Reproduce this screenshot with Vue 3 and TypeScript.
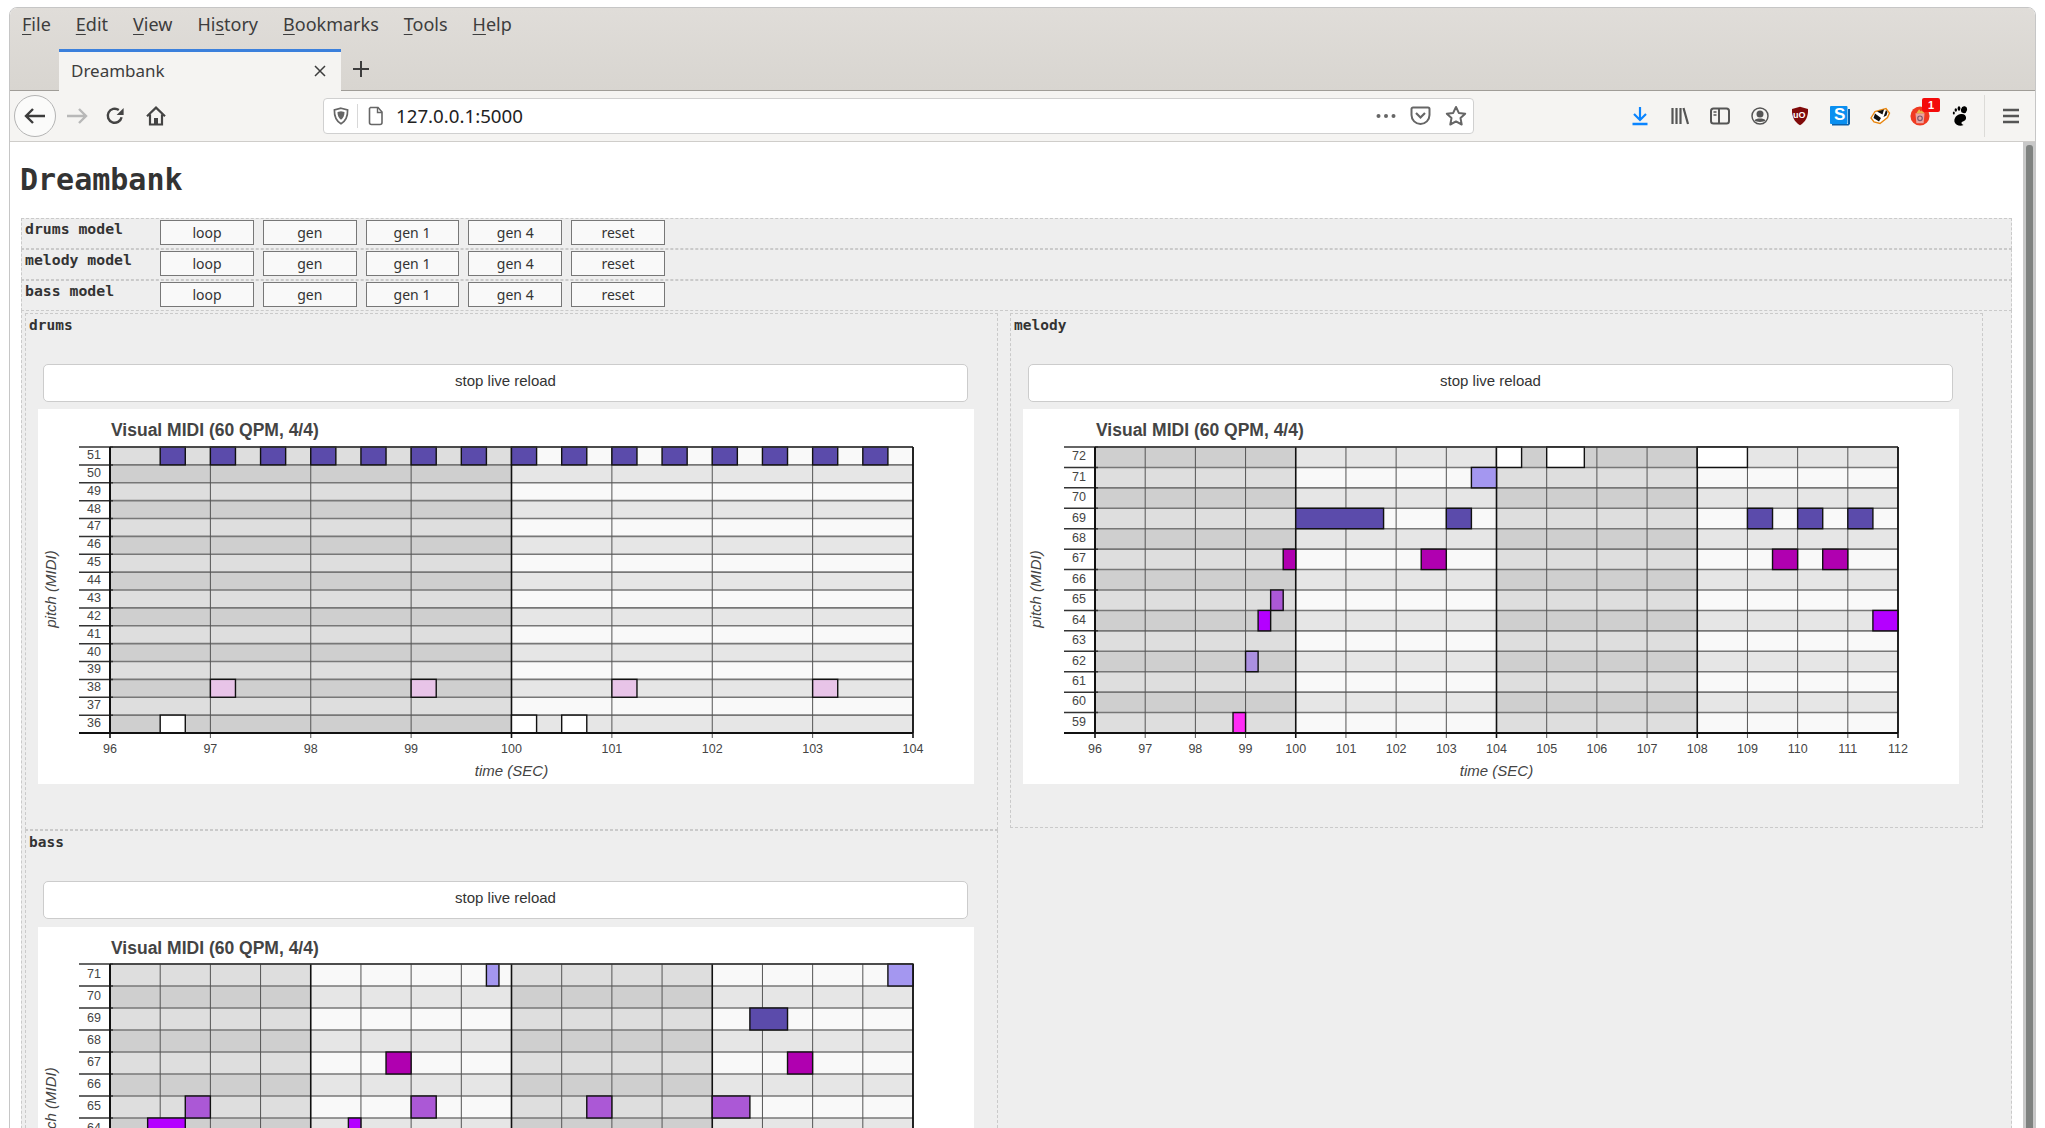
<script setup lang="ts">
type Note = [number, number, number, string];
interface ChartCfg { key: string; label: string; min: number; max: number; hi: number; lo: number; top: number; notes: Note[]; mod: string }

const P = '#5b4bab', PK = '#e8c4e8', L = '#a497f0', M = '#b000b0', V = '#ab58d6', B = '#b400ff', LV = '#ab90e0', F = '#ff2cf5', W = '#ffffff';

const drumNotes: Note[] = [];
for (let i = 0; i < 15; i++) drumNotes.push([51, 96.5 + i * 0.5, 0.25, P]);
[97, 99, 101, 103].forEach((t) => drumNotes.push([38, t, 0.25, PK]));
[96.5, 100, 100.5].forEach((t) => drumNotes.push([36, t, 0.25, W]));

const cfgs: ChartCfg[] = [
  { key: 'drums', label: 'drums', min: 96, max: 104, hi: 51, lo: 36, top: 38, notes: drumNotes, mod: 'first' },
  {
    key: 'melody', label: 'melody', min: 96, max: 112, hi: 72, lo: 59, top: 38, mod: 'side',
    notes: [
      [72, 104, 0.5, W], [72, 105, 0.75, W], [72, 108, 1, W], [71, 103.5, 0.5, L],
      [69, 100, 1.75, P], [69, 103, 0.5, P], [69, 109, 0.5, P], [69, 110, 0.5, P], [69, 111, 0.5, P],
      [67, 99.75, 0.25, M], [67, 102.5, 0.5, M], [67, 109.5, 0.5, M], [67, 110.5, 0.5, M],
      [65, 99.5, 0.25, V], [64, 99.25, 0.25, B], [64, 111.5, 0.5, B], [62, 99, 0.25, LV], [59, 98.75, 0.25, F],
    ],
  },
  {
    key: 'bass', label: 'bass', min: 96, max: 112, hi: 71, lo: 59, top: 37, mod: 'low',
    notes: [
      [71, 103.5, 0.25, L], [71, 111.5, 0.5, L], [69, 108.75, 0.75, P], [67, 101.5, 0.5, M], [67, 109.5, 0.5, M],
      [65, 97.5, 0.5, V], [65, 102, 0.5, V], [65, 105.5, 0.5, V], [65, 108, 0.75, V],
      [64, 96.75, 0.75, B], [64, 100.75, 0.25, B],
    ],
  },
];

const PX = 72, PW = 803, PH = 286;

function build(c: ChartCfg) {
  const pps = PW / (c.max - c.min);
  const count = c.hi - c.lo + 1;
  const rh = PH / count;
  const x = (t: number) => PX + (t - c.min) * pps;
  const y = (p: number) => c.top + (c.hi - p) * rh;
  const pitches = Array.from({ length: count }, (_, i) => c.hi - i);
  const secs = Array.from({ length: c.max - c.min + 1 }, (_, i) => c.min + i);
  const cells: { k: string; x: number; y: number; w: number; fill: string }[] = [];
  for (let b = 0; b * 4 < c.max - c.min; b++) {
    pitches.forEach((p) => {
      const even = p % 2 === 0;
      const dark = b % 2 === 0;
      cells.push({
        k: `${b}-${p}`, x: x(c.min + b * 4), y: y(p), w: 4 * pps,
        fill: dark ? (even ? '#cfcfcf' : '#dedede') : even ? '#e6e6e6' : '#f9f9f9',
      });
    });
  }
  return {
    ...c, rh, cells, pitches, secs, x, y,
    bottom: c.top + PH,
    notesDrawn: c.notes.map((n, i) => ({ k: i, x: x(n[1]), y: y(n[0]), w: n[2] * pps, fill: n[3] })),
  };
}
const charts = cfgs.map(build);

const menus = [
  { pre: '', key: 'F', post: 'ile' }, { pre: '', key: 'E', post: 'dit' }, { pre: '', key: 'V', post: 'iew' },
  { pre: 'Hi', key: 's', post: 'tory' }, { pre: '', key: 'B', post: 'ookmarks' }, { pre: '', key: 'T', post: 'ools' },
  { pre: '', key: 'H', post: 'elp' },
];
const models = ['drums model', 'melody model', 'bass model'];
const actions = ['loop', 'gen', 'gen 1', 'gen 4', 'reset'];
</script>

<template>
  <div class="screen">
    <div class="window">
      <header class="titlebar">
        <nav class="menubar">
          <span v-for="m in menus" :key="m.key + m.post" class="menu">{{ m.pre }}<u>{{ m.key }}</u>{{ m.post }}</span>
        </nav>
        <div class="tabstrip">
          <div class="tab">
            <span class="tab-title">Dreambank</span>
            <svg class="tab-x" width="14" height="14" viewBox="0 0 14 14"><path d="M2 2 12 12M12 2 2 12" stroke="#3d3d3d" stroke-width="1.5" fill="none" /></svg>
          </div>
          <svg class="tab-plus" width="20" height="20" viewBox="0 0 20 20"><path d="M10 2V18M2 10H18" stroke="#3d3d3d" stroke-width="2" fill="none" /></svg>
        </div>
      </header>

      <div class="toolbar">
        <div class="back">
          <svg width="24" height="20" viewBox="0 0 24 20"><path d="M22 10H3M10 3 3 10l7 7" stroke="#3c3c3c" stroke-width="2.4" fill="none" /></svg>
        </div>
        <div class="navbtn">
          <svg width="24" height="20" viewBox="0 0 24 20"><path d="M2 10H21M14 3l7 7-7 7" stroke="#b8b8b8" stroke-width="2.4" fill="none" /></svg>
        </div>
        <div class="navbtn">
          <svg width="20" height="20" viewBox="0 0 20 20"><path d="M16.6 11.2A7 7 0 1 1 13.8 4" stroke="#444" stroke-width="2.4" fill="none" /><path d="M18.6 2v7h-7z" fill="#444" /></svg>
        </div>
        <div class="navbtn home">
          <svg width="22" height="22" viewBox="0 0 22 22"><path d="M2 11.2 11 2.6l9 8.6M5 9.5V19.5H17V9.500" stroke="#444" stroke-width="2.2" fill="none" /><path d="M9 13h4v6.500H9z" fill="#444" /></svg>
        </div>

        <div class="urlbar">
          <span class="url-slot shield">
            <svg width="16" height="18" viewBox="0 0 16 18"><path d="M8 1.2 14.6 3c.2 6.400-1.800 11-6.600 13.800C3.200 14 1.200 9.400 1.400 3z" stroke="#666" stroke-width="1.700" fill="none" /><path d="M8 4.200 11.500 5c0 3.600-1 6-3.500 7.800C5.500 11 4.500 8.600 4.500 5z" fill="#666" /></svg>
          </span>
          <span class="url-sep"></span>
          <span class="url-slot page">
            <svg width="16" height="20" viewBox="0 0 16 20"><path d="M2.500 1.500H10l4 4.500V16.500a2 2 0 0 1-2 2H3.500a2 2 0 0 1-2-2V2.500z" stroke="#666" stroke-width="1.600" fill="none" /><path d="M9.500 1.500V6.500H14" stroke="#666" stroke-width="1.400" fill="none" /></svg>
          </span>
          <span class="url-text">127.0.0.1:5000</span>
          <span class="url-slot right">
            <svg width="22" height="6" viewBox="0 0 22 6"><circle cx="3.500" cy="3" r="2" fill="#666" /><circle cx="11" cy="3" r="2" fill="#666" /><circle cx="18.500" cy="3" r="2" fill="#666" /></svg>
          </span>
          <span class="url-slot">
            <svg width="21" height="20" viewBox="0 0 21 20"><path d="M3 1.500H18a1.500 1.500 0 0 1 1.500 1.500V9a9 9 0 0 1-18 0V3A1.500 1.500 0 0 1 3 1.500z" stroke="#666" stroke-width="2" fill="none" /><path d="M6 7l4.500 4.500L15 7" stroke="#666" stroke-width="2.200" fill="none" /></svg>
          </span>
          <span class="url-slot">
            <svg width="22" height="22" viewBox="0 0 22 22"><path d="M11 2l2.800 5.900 6.400.8-4.700 4.400 1.200 6.400L11 16.400l-5.700 3.100 1.200-6.400L1.800 8.700l6.400-.8z" stroke="#666" stroke-width="2" stroke-linejoin="round" fill="none" /></svg>
          </span>
        </div>

        <div class="addons">
          <span class="addon">
            <svg width="18" height="20" viewBox="0 0 18 20"><path d="M9 1V13.500M3 8l6 6 6-6" stroke="#0a84ff" stroke-width="2.200" fill="none" /><path d="M1.500 18H16.500" stroke="#0a84ff" stroke-width="2.400" /></svg>
          </span>
          <span class="addon">
            <svg width="20" height="20" viewBox="0 0 20 20"><path d="M2.500 2V18M6.500 2V18M10.500 2V18M13.500 2 18 18" stroke="#555" stroke-width="2.200" fill="none" /></svg>
          </span>
          <span class="addon">
            <svg width="20" height="18" viewBox="0 0 20 18"><rect x="1" y="1.500" width="18" height="15" rx="2.500" stroke="#555" stroke-width="2" fill="none" /><path d="M9 1.500V16.500" stroke="#555" stroke-width="2" /><path d="M3.500 5H6.500M3.500 8H6.500" stroke="#555" stroke-width="1.300" /></svg>
          </span>
          <span class="addon">
            <svg width="18" height="18" viewBox="0 0 18 18"><circle cx="9" cy="9" r="8" stroke="#555" stroke-width="1.500" fill="none" /><circle cx="9" cy="7" r="3.500" fill="#555" /><path d="M3.500 13.200C5 10.800 13 10.800 14.500 13.200 13 15.500 5 15.500 3.500 13.200z" fill="#555" /></svg>
          </span>
          <span class="addon ublock">
            <svg width="18" height="20" viewBox="0 0 18 20"><path d="M9 .8 17 3c.4 7.500-2.400 13-8 16.200C3.400 16 .6 10.500 1 3z" fill="#800a0a" /></svg>
            <span class="ublock-text">uO</span>
          </span>
          <span class="addon skype">
            <svg width="20" height="20" viewBox="0 0 20 20"><path d="M2 18V19.500H18.500L20 18V3H18V18z" fill="#0a5fa8" /><rect x="0" y="0" width="17.500" height="18" rx="1" fill="#0a8ff0" /></svg>
            <span class="skype-text">S</span>
          </span>
          <span class="addon">
            <svg width="22" height="18" viewBox="0 0 22 18"><path d="M2 11 6 4.500 17 1.500l3.500 4.500-2 4.500L11 16.500 5 15z" fill="#fff" stroke="#e8860f" stroke-width="1.400" /><path d="M6 6.500 12 11l-2 3.500L4.500 11zM17 3l-2.500 7 3-1.500 1-3.500z" fill="#111" /><path d="M8 4.500l7-2 -1.500 5z" fill="#111" /></svg>
          </span>
          <span class="addon recycle">
            <svg width="20" height="20" viewBox="0 0 22 22"><circle cx="11" cy="11" r="10.500" fill="#ef3a22" /><path d="M6 8H16L15 19H7z" fill="#eba3a0" /><path d="M7 8 10 3.500 12 6 14 3.500 15.500 8z" fill="#e8b64a" /><circle cx="11" cy="13.500" r="2.500" stroke="#7a5a70" stroke-width="1.300" fill="none" /></svg>
            <span class="badge">1</span>
          </span>
          <span class="addon">
            <svg width="16" height="20" viewBox="0 0 16 20"><path d="M9 8c3-.5 5.500 1.500 5 4.500-.5 3-4.500 2.500-4.500 4.500 0 1 1 1.500 2 2-3 1.500-8 .5-9-3-.8-3.500 2-7.500 6.500-8z" fill="#000" /><ellipse cx="12" cy="3.700" rx="3" ry="3.500" transform="rotate(15 12 3.700)" fill="#000" /><ellipse cx="7" cy="2.500" rx="1.400" ry="2.200" fill="#000" /><ellipse cx="3.800" cy="4" rx="1.200" ry="1.800" fill="#000" /><ellipse cx="1.800" cy="7" rx="1" ry="1.500" fill="#000" /></svg>
          </span>
          <span class="addon-sep"></span>
          <span class="hamburger">
            <svg width="18" height="16" viewBox="0 0 18 16"><path d="M1 2H17M1 8H17M1 14H17" stroke="#555" stroke-width="2.400" /></svg>
          </span>
        </div>
      </div>

      <div class="viewport">
        <main class="content">
          <h1 class="title">Dreambank</h1>
          <div v-for="m in models" :key="m" class="model-row">
            <span class="model-label">{{ m }}</span>
            <div class="actions">
              <button v-for="a in actions" :key="a" class="action" type="button">{{ a }}</button>
            </div>
          </div>
          <div class="sections">
            <section v-for="c in charts" :key="c.key" class="section" :class="c.mod">
              <div class="section-label">{{ c.label }}</div>
              <button class="reload" type="button">stop live reload</button>
              <div class="panel">
                <svg class="chart" width="936" height="375" viewBox="0 0 936 375">
                  <text x="73" y="27" class="chart-title">Visual MIDI (60 QPM, 4/4)</text>
                  <rect v-for="r in c.cells" :key="r.k" :x="r.x" :y="r.y" :width="r.w" :height="c.rh" :fill="r.fill" />
                  <g v-for="p in c.pitches" :key="p">
                    <line :x1="PX" :x2="PX + PW" :y1="c.y(p)" :y2="c.y(p)" stroke="#777" stroke-width="1.600" />
                    <line x1="41" :x2="PX + 3" :y1="c.y(p)" :y2="c.y(p)" stroke="#333" stroke-width="1.500" />
                    <text x="63" :y="c.y(p) + c.rh / 2 + 3" class="tick" text-anchor="end">{{ p }}</text>
                  </g>
                  <g v-for="s in c.secs" :key="s">
                    <line :x1="c.x(s)" :x2="c.x(s)" :y1="c.top" :y2="c.bottom + 5" :stroke="(s - c.min) % 4 === 0 ? '#111' : '#555'" :stroke-width="(s - c.min) % 4 === 0 ? 1.6 : 1" />
                    <text :x="c.x(s)" :y="c.bottom + 20" class="tick" text-anchor="middle">{{ s }}</text>
                  </g>
                  <rect v-for="n in c.notesDrawn" :key="n.k" :x="n.x" :y="n.y" :width="n.w" :height="c.rh" :fill="n.fill" stroke="#111" stroke-width="1.400" />
                  <line :x1="PX" :x2="PX + PW" :y1="c.top" :y2="c.top" stroke="#333" stroke-width="1.500" />
                  <line x1="41" :x2="PX + PW" :y1="c.bottom" :y2="c.bottom" stroke="#111" stroke-width="2" />
                  <line :x1="PX" :x2="PX" :y1="c.top" :y2="c.bottom" stroke="#111" stroke-width="2" />
                  <line :x1="PX + PW" :x2="PX + PW" :y1="c.top" :y2="c.bottom" stroke="#111" stroke-width="1.200" />
                  <text :x="PX + PW / 2" :y="c.bottom + 43" class="axis" text-anchor="middle">time (SEC)</text>
                  <text :transform="`translate(18 ${c.top + PH / 2 - 1}) rotate(-90)`" class="axis" text-anchor="middle">pitch (MIDI)</text>
                </svg>
              </div>
            </section>
          </div>
        </main>
        <div class="scrollbar"><div class="thumb"></div></div>
      </div>
    </div>
  </div>
</template>

<style>
html, body { margin: 0; overflow: hidden; background: #fff; }
</style>

<style scoped>
.screen {
  width: 2045px;
  height: 1128px;
  overflow: hidden;
  background: #fff;
  padding: 7px 0 0 9px;
  box-sizing: border-box;
  font-family: "Noto Sans", sans-serif;
  color: #333;
}
.window {
  width: 2027px;
  height: 1200px;
  box-sizing: border-box;
  border: 1px solid #c6c6c6;
  border-radius: 8px 8px 0 0;
  overflow: hidden;
}
.titlebar { background: linear-gradient(#e0ddd9, #d8d5d0); height: 83px; }
.menubar {
  height: 41px;
  box-sizing: border-box;
  padding: 0 0 10px 12px;
  display: flex;
  align-items: center;
  gap: 25px;
  font-size: 18px;
  color: #3d3d3d;
}
.menu u { text-underline-offset: 3px; text-decoration-thickness: 1px; }
.tabstrip {
  height: 42px;
  box-sizing: border-box;
  border-bottom: 1px solid #a09d98;
  display: flex;
  padding-left: 49px;
}
.tab {
  width: 282px;
  height: 42px;
  box-sizing: border-box;
  border-top: 3px solid #3b80dc;
  background: #f5f4f2;
  display: flex;
  align-items: center;
  padding: 0 14px 2px 12px;
  justify-content: space-between;
  font-size: 17px;
  color: #3d3d3d;
}
.tab-plus { margin: 10px 0 0 10px; }
.toolbar {
  height: 51px;
  box-sizing: border-box;
  background: #f5f4f2;
  border-bottom: 1px solid #cfcdca;
  display: flex;
  align-items: center;
  padding-left: 4px;
  overflow: hidden;
}
.toolbar > * { flex: none; }
.back {
  width: 42px;
  height: 42px;
  box-sizing: border-box;
  border: 1px solid #b4b4b4;
  border-radius: 50%;
  background: #fbfbfa;
  display: flex;
  align-items: center;
  justify-content: center;
  margin-right: 2px;
}
.navbtn { width: 38px; display: flex; justify-content: center; align-items: center; }
.navbtn.home { margin-left: 3px; }
.urlbar {
  margin-left: 148px;
  width: 1151px;
  height: 36px;
  box-sizing: border-box;
  border: 1px solid #d0d0d0;
  border-radius: 4px;
  background: #fff;
  display: flex;
  align-items: center;
}
.url-slot { width: 35px; flex: none; display: flex; justify-content: center; align-items: center; }
.url-slot.shield { width: 33px; }
.url-slot.page { width: 36px; }
.url-slot.right { margin-left: auto; }
.url-sep { width: 1px; height: 24px; background: #d8d8d8; }
.url-text { font-size: 18.7px; color: #222; margin-left: 2px; position: relative; top: -1px; }
.addons { display: flex; align-items: center; margin-left: 146px; }
.addons > * { flex: none; }
.addon { width: 40px; height: 30px; display: flex; justify-content: center; align-items: center; position: relative; }
.addon-sep { width: 1px; height: 42px; background: #dcdbd8; margin-left: 4px; }
.hamburger { width: 52px; display: flex; justify-content: center; }
.ublock-text {
  position: absolute;
  left: 13px;
  top: 8px;
  font: bold 9px/12px "Liberation Sans", sans-serif;
  color: #fff;
}
.skype-text {
  position: absolute;
  left: 14px;
  top: 3px;
  font: 900 17px/22px "Liberation Sans", sans-serif;
  color: #fff;
}
.badge {
  position: absolute;
  left: 22px;
  top: -3px;
  width: 18px;
  height: 14px;
  background: #f40b0b;
  border-radius: 2px;
  color: #fff;
  font: bold 11px/14px "Liberation Sans", sans-serif;
  text-align: center;
}
.viewport { display: flex; height: 1100px; }
.content { width: 2013px; flex: none; box-sizing: border-box; padding: 0 11px; background: #fff; }
.title {
  margin: 0 0 0 -1px;
  height: 76px;
  font: bold 30px/76px "DejaVu Sans Mono", monospace;
  color: #333;
}
.model-row {
  height: 31px;
  box-sizing: border-box;
  border: 1px dashed #cacaca;
  background: #eee;
  display: flex;
  padding: 1px 0 0 3px;
}
.model-label {
  width: 135px;
  font: bold 14.8px/18px "DejaVu Sans Mono", monospace;
  color: #333;
}
.actions { display: flex; gap: 8.75px; }
.action {
  width: 94px;
  height: 25px;
  box-sizing: border-box;
  padding: 0;
  border: 1px solid #777;
  background: #f9f9f9;
  font: 14px "Noto Sans", sans-serif;
  color: #333;
}
.action:nth-child(3) { width: 93px; margin-right: 1px; }
.sections {
  margin-top: -1px;
  border: 1px dashed #cacaca;
  background: #eee;
  padding: 2px 0 0 3px;
  display: grid;
  grid-template-columns: 973px 973px;
  column-gap: 12px;
  align-items: start;
}
.section {
  box-sizing: border-box;
  border: 1px dashed #cacaca;
  padding: 0 0 45px 12px;
}
.section.side { padding-bottom: 43px; }
.section-label {
  height: 22px;
  margin-left: -9px;
  font: bold 14.5px/22px "DejaVu Sans Mono", monospace;
  color: #333;
}
.reload {
  display: block;
  width: 925px;
  height: 38px;
  box-sizing: border-box;
  margin: 28px 0 0 5px;
  padding: 0 0 6px;
  border: 1px solid #ccc;
  border-radius: 5px;
  background: #fff;
  font: 15px "Liberation Sans", sans-serif;
  color: #333;
}
.panel { width: 936px; height: 375px; margin-top: 7px; background: #fff; }
.section.low .panel { margin-top: 8px; }
.chart { display: block; }
.chart-title { font: bold 17.5px "Liberation Sans", sans-serif; fill: #444; }
.tick { font: 12.5px "Liberation Sans", sans-serif; fill: #444; }
.axis { font: italic 15px "Liberation Sans", sans-serif; fill: #444; }
.scrollbar { width: 13px; flex: none; background: #c8c8c8; padding: 3px 3px 0; box-sizing: border-box; }
.thumb { height: 1100px; background: #7f8280; border-radius: 3px 3px 0 0; }
</style>
